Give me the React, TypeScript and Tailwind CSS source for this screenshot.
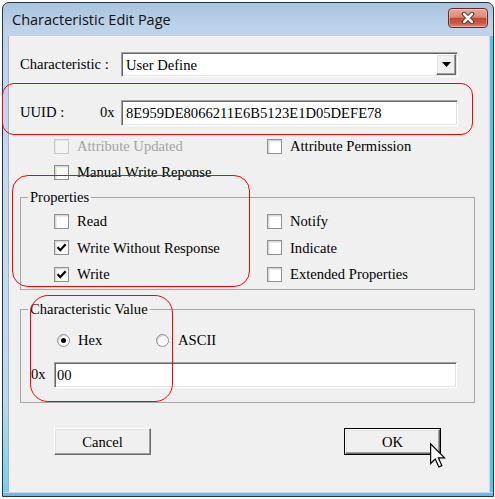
import React from "react";

function Check({ checked, disabled }: { checked?: boolean; disabled?: boolean }) {
  return (
    <span
      className={`w-[15px] h-[15px] shrink-0 border flex items-center justify-center ${
        disabled
          ? "border-[#c9c9c9] bg-[#f4f4f4] shadow-[inset_1px_1px_0_#e6e6e6]"
          : "border-[#8e8f8f] bg-white shadow-[inset_1px_1px_0_#d8d8d8,inset_2px_2px_0_#ececec]"
      }`}
    >
      {checked && (
        <svg width="11" height="11" viewBox="0 0 11 11">
          <path d="M1.6 5.2 L4.3 8.2 L9.6 2.2" fill="none" stroke="#000" strokeWidth="2.2" />
        </svg>
      )}
    </span>
  );
}

function CheckRow({ label, checked, disabled }: { label: string; checked?: boolean; disabled?: boolean }) {
  return (
    <div className="flex items-center h-[16px]">
      <Check checked={checked} disabled={disabled} />
      <span className={`ml-[8px] leading-[16px] whitespace-nowrap ${disabled ? "text-[#a3a3a3]" : "text-black"}`}>
        {label}
      </span>
    </div>
  );
}

function Radio({ checked }: { checked?: boolean }) {
  return (
    <span className="w-[13px] h-[13px] shrink-0 rounded-full border border-[#8e8f8f] bg-white shadow-[inset_1px_1px_1px_#cfcfcf] flex items-center justify-center">
      {checked && <span className="w-[5px] h-[5px] rounded-full bg-black" />}
    </span>
  );
}

const inset =
  "border border-t-[#a0a0a0] border-l-[#a0a0a0] border-r-white border-b-white shadow-[inset_1px_1px_0_#696969,inset_-1px_-1px_0_#e3e3e3] bg-white";

const raised =
  "border border-t-[#ffffff] border-l-[#ffffff] border-r-[#696969] border-b-[#696969] shadow-[inset_-1px_-1px_0_#a0a0a0,inset_1px_1px_0_#e3e3e3] bg-[#f0f0f0]";

export default function App() {
  return (
    <div className="w-[495px] h-[499px] bg-white relative overflow-hidden pt-[2px] pl-[2px] font-['Liberation_Serif','Times_New_Roman',serif] text-[14.6px] text-black">
      {/* Window */}
      <div className="w-[492px] h-[495px] border border-[#2b343e] rounded-t-[7px] overflow-hidden flex flex-col bg-[linear-gradient(180deg,#a9c3df_0%,#bdd3ea_5%,#c8daee_40%,#b9dcf0_80%,#6fd0f0_100%)]">
        {/* Title bar */}
        <div className="h-[33px] shrink-0 flex items-start justify-between">
          <span className="pl-[9px] mt-[6px] leading-[22px] font-['Open_Sans','Noto_Sans',sans-serif] text-[14.5px] text-[#111]">
            Characteristic Edit Page
          </span>
          <div className="mt-[5px] mr-[5px] w-[40px] h-[20px] rounded-[4px] border border-[#6b2a22] bg-[linear-gradient(180deg,#eaa898_0%,#dc8a76_45%,#c24a34_52%,#cc5a44_80%,#e08a70_100%)] shadow-[inset_0_0_0_1px_rgba(255,255,255,0.35)] flex items-center justify-center">
            <svg width="16" height="12" viewBox="0 0 16 12">
              <path d="M4 2 L12 10 M12 2 L4 10" stroke="#5b1f16" strokeWidth="4.4" strokeLinecap="round" />
              <path d="M4 2 L12 10 M12 2 L4 10" stroke="#ffffff" strokeWidth="2.6" strokeLinecap="round" />
            </svg>
          </div>
        </div>

        {/* Body */}
        <div className="flex-1 flex flex-col">
          <div className="flex-1 flex">
            <div className="w-[5px] shrink-0" />
            {/* Client area */}
            <div className="flex-1 bg-[#f0f0f0] border-l border-[#9fb4ca] border-r border-r-[#d6d0f0] flex flex-col">
              {/* Characteristic combo */}
              <div className="flex items-center mt-[16px] pl-[11px]">
                <span className="w-[101px] whitespace-nowrap">Characteristic :</span>
                <div className={`w-[337px] h-[25px] flex items-center ${inset}`}>
                  <span className="flex-1 pl-[4px] leading-[18px]">User Define</span>
                  <div className={`w-[20px] h-[21px] mr-[1px] flex items-center justify-center ${raised}`}>
                    <svg width="9" height="5" viewBox="0 0 9 5">
                      <path d="M0 0 H9 L4.5 5 Z" fill="#000" />
                    </svg>
                  </div>
                </div>
              </div>

              {/* UUID */}
              <div className="flex items-center mt-[23px] pl-[11px]">
                <span className="w-[80px]">UUID :</span>
                <span className="w-[21px]">0x</span>
                <div className={`w-[337px] h-[26px] flex items-center ${inset}`}>
                  <span className="pl-[4px] leading-[18px]">8E959DE8066211E6B5123E1D05DEFE78</span>
                </div>
              </div>

              {/* Attribute checkboxes */}
              <div className="grid grid-cols-[213px_auto] gap-y-[10px] mt-[12px] pl-[45px]">
                <CheckRow label="Attribute Updated" disabled />
                <CheckRow label="Attribute Permission" />
                <CheckRow label="Manual Write Reponse" />
              </div>

              {/* Properties */}
              <fieldset className="mt-[9px] ml-[11px] w-[455px] border border-[#a6a6a6] px-[7px]">
                <legend className="px-[2px] h-[16px] leading-[16px]">Properties</legend>
                <div className="grid grid-cols-[213px_auto] gap-y-[10.5px] pt-[8px] pb-[7px] pl-[26px]">
                  <CheckRow label="Read" />
                  <CheckRow label="Notify" />
                  <CheckRow label="Write Without Response" checked />
                  <CheckRow label="Indicate" />
                  <CheckRow label="Write" checked />
                  <CheckRow label="Extended Properties" />
                </div>
              </fieldset>

              {/* Characteristic Value */}
              <fieldset className="mt-[11px] ml-[11px] w-[455px] border border-[#a6a6a6] px-[7px]">
                <legend className="px-[2px] h-[16px] leading-[16px]">Characteristic Value</legend>
                <div className="flex items-center h-[16px] mt-[15px] pl-[29px]">
                  <div className="w-[99px] flex items-center">
                    <Radio checked />
                    <span className="ml-[8px] leading-[16px]">Hex</span>
                  </div>
                  <div className="flex items-center">
                    <Radio />
                    <span className="ml-[9px] leading-[16px]">ASCII</span>
                  </div>
                </div>
                <div className="flex items-center mt-[14px] mb-[14px] pl-[3px]">
                  <span className="w-[23px]">0x</span>
                  <div className={`w-[403px] h-[26px] flex items-center ${inset}`}>
                    <span className="pl-[2px] leading-[18px]">00</span>
                  </div>
                </div>
              </fieldset>

              {/* Buttons */}
              <div className="flex mt-[25px] pl-[45px]">
                <div className={`w-[97px] h-[27px] flex items-center justify-center ${raised}`}>
                  <span className="leading-[18px]">Cancel</span>
                </div>
                <div className="ml-[193px] w-[97px] h-[27px] border border-black flex">
                  <div className={`flex-1 flex items-center justify-center ${raised}`}>
                    <span className="leading-[18px]">OK</span>
                  </div>
                </div>
              </div>
            </div>
            <div className="w-[3px] shrink-0 bg-[#52c6ec]" />
          </div>
          <div className="h-[4px] shrink-0 bg-[#52c6ec] border-t border-[#d6d0f0]" />
        </div>
      </div>

      {/* Red annotation outlines */}
      <div className="absolute left-[2px] top-[83px] w-[471px] h-[52px] border-[1.5px] border-[#ff0000] rounded-[12px] pointer-events-none" />
      <div className="absolute left-[12px] top-[175px] w-[238px] h-[112px] border-[1.5px] border-[#ff0000] rounded-[16px] pointer-events-none" />
      <div className="absolute left-[30px] top-[295px] w-[143px] h-[107px] border-[1.5px] border-[#ff0000] rounded-[18px] pointer-events-none" />

      {/* Mouse cursor */}
      <svg className="absolute left-[430px] top-[443px]" width="16" height="25" viewBox="0 0 13 20">
        <path d="M0.5 0.5 V16.5 L4.3 12.8 L7.2 19.3 L9.6 18.2 L6.8 11.9 H11.8 Z" fill="#fff" stroke="#000" strokeWidth="1" strokeLinejoin="miter" />
      </svg>
    </div>
  );
}
